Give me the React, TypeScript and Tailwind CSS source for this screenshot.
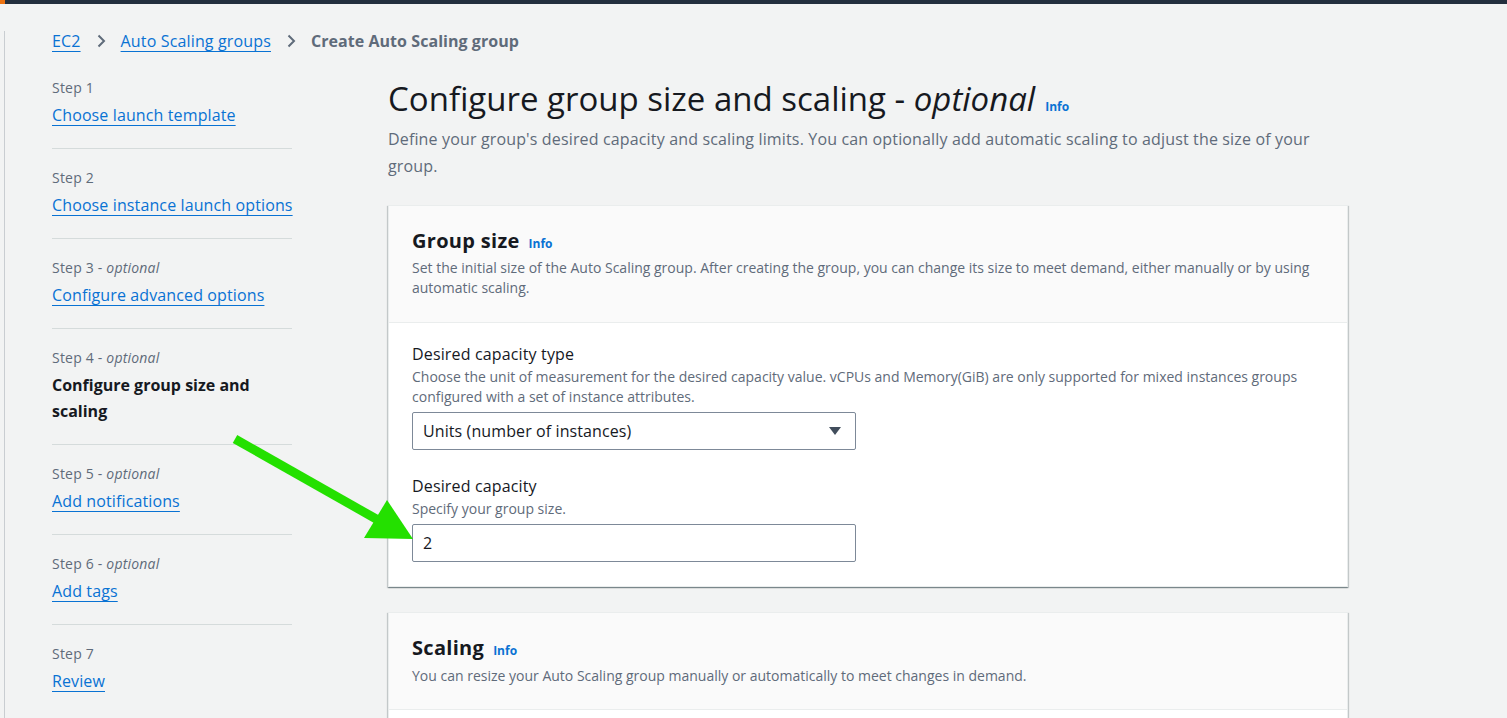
import React from "react";

const Info = ({ className = "" }: { className?: string }) => (
  <span className={`text-[12px] font-bold text-[#0972d3] ${className}`}>Info</span>
);

const Chevron = () => (
  <svg width="16" height="16" viewBox="0 0 16 16" className="mx-[12px]">
    <path d="M5.5 2.5 11 8l-5.5 5.5" fill="none" stroke="#5f6b7a" strokeWidth="2" strokeLinejoin="miter" />
  </svg>
);

type Step = { n: string; opt?: boolean; title: string; active?: boolean };
const steps: Step[] = [
  { n: "Step 1", title: "Choose launch template" },
  { n: "Step 2", title: "Choose instance launch options" },
  { n: "Step 3", opt: true, title: "Configure advanced options" },
  { n: "Step 4", opt: true, title: "Configure group size and scaling", active: true },
  { n: "Step 5", opt: true, title: "Add notifications" },
  { n: "Step 6", opt: true, title: "Add tags" },
  { n: "Step 7", title: "Review" },
];

const cardShadow =
  "shadow-[0_1px_1px_0_rgba(0,28,36,0.3),1px_1px_1px_0_rgba(0,28,36,0.15),-1px_1px_1px_0_rgba(0,28,36,0.15)]";

export default function App() {
  return (
    <div className="relative min-h-screen w-full overflow-hidden bg-[#f2f3f3] font-['Open_Sans','Noto_Sans',sans-serif] text-[#16191f]">
      <div className="flex h-[4px] bg-[#232f3e]">
        <div className="w-[5px] bg-[#ec7211]" />
      </div>
      <div className="ml-[4px] min-h-[714px] border-l border-[#c9cdd1] pl-[47px]">
        {/* breadcrumb */}
        <div className="mt-[27px] flex h-[20px] items-center text-[16px] leading-[20px] tracking-[0.15px]">
          <a className="text-[#0972d3] underline decoration-[1px] underline-offset-[4px]" href="#">EC2</a>
          <Chevron />
          <a className="text-[#0972d3] underline decoration-[1px] underline-offset-[4px]" href="#">Auto Scaling groups</a>
          <Chevron />
          <span className="font-bold tracking-[0.05px] text-[#5f6b7a]">Create Auto Scaling group</span>
        </div>

        <div className="mt-[28px] flex gap-[96px]">
          {/* nav */}
          <nav className="w-[240px] shrink-0">
            {steps.map((s, i) => (
              <div
                key={s.n}
                className={`${i > 0 ? "border-t border-[#d5dbdb] pt-[20px]" : ""} pb-[20px]`}
              >
                <div className="text-[14px] leading-[18px] tracking-[0.2px] text-[#5f6b7a]">
                  {s.n}
                  {s.opt && (
                    <>
                      {" - "}
                      <i>optional</i>
                    </>
                  )}
                </div>
                <div className="mt-[5px] whitespace-nowrap text-[16px] leading-[26px] tracking-[0.12px]">
                  {s.active ? (
                    <span className="font-bold tracking-normal text-[#16191f]">
                      Configure group size and
                      <br />
                      scaling
                    </span>
                  ) : (
                    <a href="#" className="text-[#0972d3] underline decoration-[1px] underline-offset-[4px]">
                      {s.title}
                    </a>
                  )}
                </div>
              </div>
            ))}
          </nav>

          {/* main */}
          <main className="w-[960px] shrink-0">
            <div className="flex items-baseline">
              <h1 className="text-[33px] font-normal leading-[40px] text-[#16191f]">
                Configure group size and scaling - <i>optional</i>
              </h1>
              <Info className="ml-[10px]" />
            </div>
            <p className="mt-[7px] text-[16px] leading-[27px] tracking-[0.15px] text-[#5f6b7a]">
              Define your group's desired capacity and scaling limits. You can optionally add automatic scaling to adjust the size of your group.
            </p>

            {/* card 1 */}
            <section className={`mt-[25px] border border-[#eaeded] bg-white ${cardShadow}`}>
              <div className="border-b border-[#eaeded] bg-[#fafafa] px-[23px] pb-[24px] pt-[23px]">
                <div className="flex items-baseline">
                  <h2 className="text-[20px] font-bold leading-[24px] tracking-[0.3px]">Group size</h2>
                  <Info className="ml-[9px]" />
                </div>
                <p className="mt-[5px] text-[14px] leading-[20px] text-[#5f6b7a]">
                  Set the initial size of the Auto Scaling group. After creating the group, you can change its size to meet demand, either manually or by using automatic scaling.
                </p>
              </div>
              <div className="px-[23px] pb-[24px] pt-[20px]">
                <div className="text-[16px] leading-[22px] tracking-[0.15px]">Desired capacity type</div>
                <p className="mt-[2px] text-[14px] leading-[20px] text-[#5f6b7a]">
                  Choose the unit of measurement for the desired capacity value. vCPUs and Memory(GiB) are only supported for mixed instances groups configured with a set of instance attributes.
                </p>
                <div className="mt-[5px] flex h-[38px] w-[444px] items-center justify-between rounded-[2px] border border-[#7d8998] bg-white pl-[10px] pr-[13px] text-[16px] tracking-[0.1px]">
                  <span>Units (number of instances)</span>
                  <svg width="14" height="10" viewBox="0 0 14 10">
                    <path d="M1 1h12L7 9z" fill="#414d5c" />
                  </svg>
                </div>

                <div className="mt-[25px] text-[16px] leading-[22px] tracking-[0.15px]">Desired capacity</div>
                <p className="mt-[2px] text-[14px] leading-[20px] text-[#5f6b7a]">Specify your group size.</p>
                <div className="mt-[5px] flex h-[38px] w-[444px] items-center rounded-[2px] border border-[#7d8998] bg-white pl-[10px] text-[16px]">
                  2
                </div>
              </div>
            </section>

            {/* card 2 */}
            <section className={`mt-[25px] border border-[#eaeded] bg-white ${cardShadow}`}>
              <div className="border-b border-[#eaeded] bg-[#fafafa] px-[23px] pb-[23px] pt-[23px]">
                <div className="flex items-baseline">
                  <h2 className="text-[20px] font-bold leading-[24px] tracking-[0.3px]">Scaling</h2>
                  <Info className="ml-[9px]" />
                </div>
                <p className="mt-[6px] text-[14px] leading-[20px] text-[#5f6b7a]">
                  You can resize your Auto Scaling group manually or automatically to meet changes in demand.
                </p>
              </div>
              <div className="h-[200px]" />
            </section>
          </main>
        </div>
      </div>

      {/* annotation arrow */}
      <svg className="pointer-events-none absolute left-0 top-0" width="1507" height="718" viewBox="0 0 1507 718">
        <line x1="235" y1="439" x2="378" y2="520" stroke="#24e000" strokeWidth="9" />
        <polygon points="387,500 364,538 413,539" fill="#24e000" />
      </svg>
    </div>
  );
}
